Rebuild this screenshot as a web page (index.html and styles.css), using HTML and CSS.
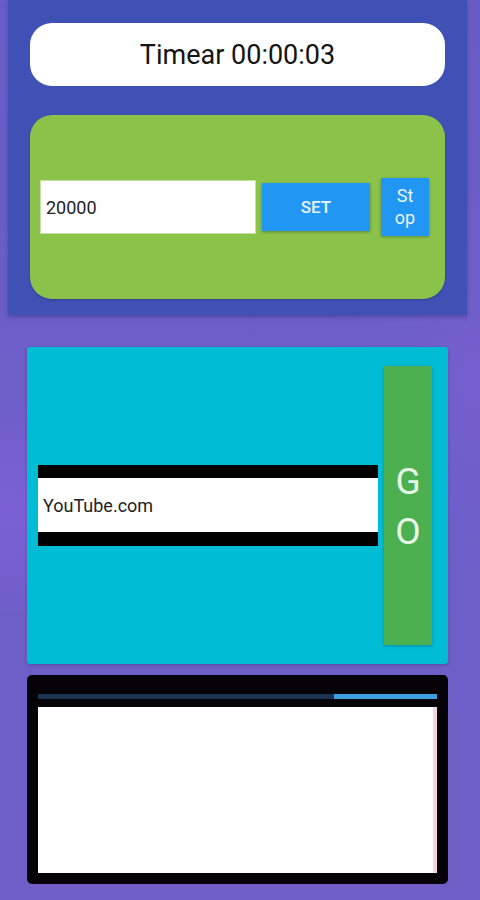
FILE: index.html
```html
<!DOCTYPE html>
<html>
<head>
<meta charset="utf-8">
<link rel="stylesheet" href="styles.css">
</head>
<body>
<div class="screen">
  <section class="top-panel">
    <div class="timer-pill">Timear 00:00:03</div>
    <div class="green-card">
      <div class="num-input">20000</div>
      <div class="btn-set">SET</div>
      <div class="btn-stop">St<br>op</div>
    </div>
  </section>
  <section class="url-card">
    <div class="url-input"><span>YouTube.com</span></div>
    <div class="btn-go">G<br>O</div>
  </section>
  <section class="web-card">
    <div class="progress"><div class="progress-fill"></div></div>
    <div class="web-view"></div>
  </section>
</div>
</body>
</html>
```

FILE: styles.css
```css
html, body {
  margin: 0;
  padding: 0;
}
body {
  width: 480px;
  height: 900px;
  overflow: hidden;
  font-family: Roboto, "Liberation Sans", sans-serif;
  background:
    radial-gradient(ellipse 160px 110px at 0px 510px, rgba(140, 100, 230, 0.45), rgba(140, 100, 230, 0) 100%),
    radial-gradient(ellipse 160px 200px at 480px 380px, rgba(130, 100, 220, 0.3), rgba(130, 100, 220, 0) 100%),
    linear-gradient(180deg, #6a5cc6 0%, #6d5ec8 50%, #6e5ec6 100%);
}
.screen {
  display: flex;
  flex-direction: column;
}
.top-panel {
  margin: 0 13px 0 8px;
  height: 315px;
  box-sizing: border-box;
  background: #3f51b5;
  padding: 23px 22px 16px 22px;
  display: flex;
  flex-direction: column;
  box-shadow: 0 2px 4px rgba(40, 30, 90, 0.35);
}
.timer-pill {
  height: 63px;
  background: #ffffff;
  border-radius: 22px;
  display: flex;
  align-items: center;
  justify-content: center;
  font-size: 27px;
  color: #141414;
  padding-top: 1px;
  box-sizing: border-box;
}
.green-card {
  margin-top: 29px;
  height: 184px;
  background: #8bc34a;
  border-radius: 22px;
  display: flex;
  align-items: center;
  padding: 0 16px 0 10px;
  box-shadow: 0 1px 2px rgba(20, 30, 80, 0.4);
}
.num-input {
  width: 216px;
  height: 54px;
  box-sizing: border-box;
  background: #ffffff;
  border: 1px solid #c5e1a5;
  font-size: 18px;
  color: #222;
  display: flex;
  align-items: center;
  padding-left: 5px;
}
.btn-set {
  margin-left: 6px;
  width: 108px;
  height: 48px;
  background: #2196f3;
  color: #e8f4fe;
  font-size: 17px;
  font-weight: 500;
  display: flex;
  align-items: center;
  justify-content: center;
  box-shadow: 0 1px 3px rgba(0, 0, 0, 0.3);
}
.btn-stop {
  margin-left: 11px;
  width: 48px;
  height: 58px;
  background: #2196f3;
  color: #e8f4fe;
  font-size: 18px;
  line-height: 22px;
  text-align: center;
  display: flex;
  align-items: center;
  justify-content: center;
  box-shadow: 0 1px 3px rgba(0, 0, 0, 0.3);
}
.url-card {
  margin: 32px 32px 0 27px;
  height: 317px;
  box-sizing: border-box;
  background: #00bcd4;
  border-radius: 3px;
  padding: 19px 16px 19px 11px;
  display: flex;
  align-items: center;
  box-shadow: 0 1px 3px rgba(40, 30, 90, 0.35);
}
.url-input {
  width: 340px;
  height: 81px;
  box-sizing: border-box;
  background: #000000;
  padding: 13px 0 14px 0;
  display: flex;
}
.url-input span {
  flex: 1;
  background: #ffffff;
  font-size: 18px;
  color: #222;
  display: flex;
  align-items: center;
  padding-left: 5px;
  padding-top: 1px;
}
.btn-go {
  margin-left: 6px;
  width: 48px;
  align-self: stretch;
  background: #4caf50;
  color: #e8f8e6;
  font-size: 37px;
  line-height: 50px;
  text-align: center;
  display: flex;
  align-items: center;
  justify-content: center;
  padding-top: 3px;
  box-sizing: border-box;
  box-shadow: 0 1px 3px rgba(0, 0, 0, 0.25);
}
.web-card {
  margin: 11px 32px 0 27px;
  height: 209px;
  box-sizing: border-box;
  background: #050308;
  border-radius: 5px;
  padding: 19px 11px 11px 11px;
  display: flex;
  flex-direction: column;
}
.progress {
  height: 5px;
  background: #1a3350;
  display: flex;
  justify-content: flex-end;
}
.progress-fill {
  width: 103px;
  background: #3a9fdc;
}
.web-view {
  margin-top: 8px;
  flex: 1;
  background: #ffffff;
  border-right: 4px solid #f6d6e2;
}
```
